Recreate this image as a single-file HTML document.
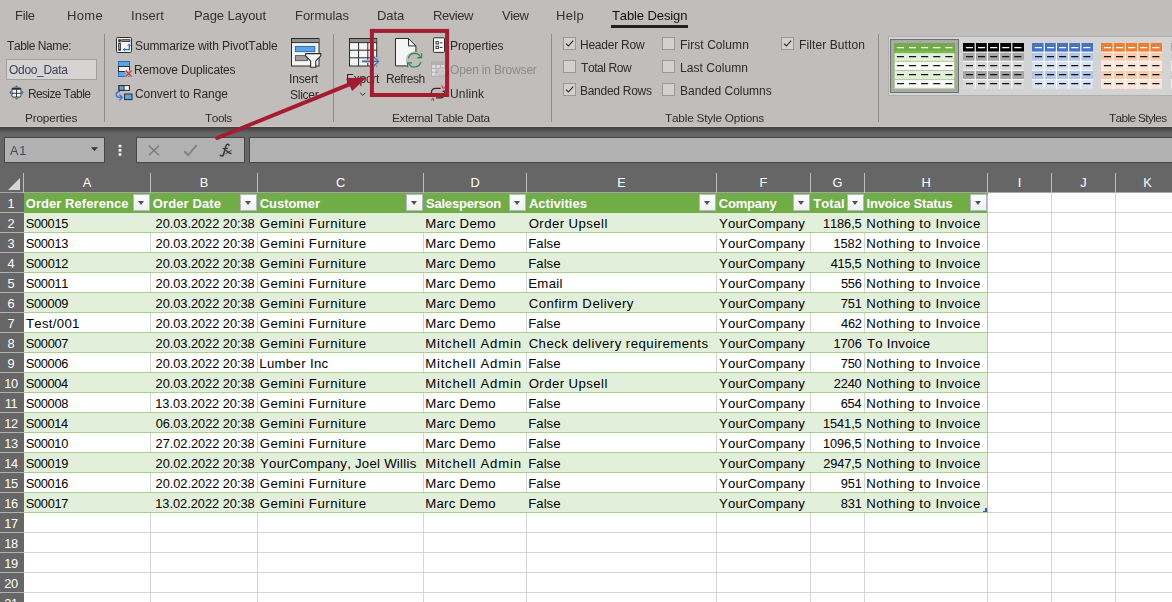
<!DOCTYPE html>
<html><head><meta charset="utf-8"><title>Excel</title>
<style>
html,body{margin:0;padding:0;}
body{width:1172px;height:602px;overflow:hidden;position:relative;background:#fff;font-family:"Liberation Sans",sans-serif;}
.abs{position:absolute;}
#ribbon{position:absolute;left:0;top:0;width:1172px;height:127px;background:#c1bdba;}
.tab{position:absolute;top:7px;font-size:13.4px;color:#262626;white-space:nowrap;line-height:16px;}
.rt{position:absolute;will-change:transform;font-size:12px;color:#262626;white-space:nowrap;line-height:16px;font-kerning:none;}
.gl{position:absolute;font-size:11.6px;color:#333;white-space:nowrap;line-height:14px;top:110px;transform:translateX(-50%);}
.sep{position:absolute;top:34px;width:1px;height:88px;background:#8f8d8b;}
.cb{position:absolute;width:13px;height:13px;box-sizing:border-box;border:1px solid #9a9896;background:#d3d1cf;}
#fbar{position:absolute;left:0;top:127px;width:1172px;height:46px;background:#666666;}
.fbox{position:absolute;top:10.3px;height:25.4px;box-sizing:border-box;background:#b1b1b1;border:1px solid #474747;}
#grid{position:absolute;left:0;top:173px;width:1172px;height:429px;background:#fff;}
.ch{position:absolute;top:0;height:19px;color:#fff;font-size:12.8px;line-height:20px;text-align:center;}
.rh{position:absolute;left:0;width:22px;background:#666666;color:#fff;font-size:12.8px;line-height:21px;text-align:center;height:19px;letter-spacing:-0.35px;}
.c{position:absolute;font-size:13.2px;font-kerning:none;line-height:21px;height:20px;white-space:nowrap;color:#000;overflow:visible;}
.h{font-weight:bold;color:#fff;}
.fb{position:absolute;width:16.8px;height:16.5px;background:linear-gradient(#ffffff,#eef0f4);border:1px solid #b6b4c6;box-sizing:border-box;}
.fb:after{content:"";position:absolute;left:3.8px;top:5.7px;border-left:3.6px solid transparent;border-right:3.6px solid transparent;border-top:4.1px solid #505050;}
</style></head><body>

<div id="ribbon">
<div class="rt" style="left:14.63px;top:8.10px;font-size:13.0px;letter-spacing:-0.301px;color:#333130;">File</div>
<div class="rt" style="left:66.93px;top:8.10px;font-size:13.0px;letter-spacing:0.356px;color:#333130;">Home</div>
<div class="rt" style="left:130.70px;top:8.10px;font-size:13.0px;letter-spacing:0.056px;color:#333130;">Insert</div>
<div class="rt" style="left:193.73px;top:8.10px;font-size:13.0px;letter-spacing:-0.094px;color:#333130;">Page Layout</div>
<div class="rt" style="left:294.53px;top:8.10px;font-size:13.0px;letter-spacing:-0.034px;color:#333130;">Formulas</div>
<div class="rt" style="left:377.03px;top:8.10px;font-size:13.0px;letter-spacing:-0.065px;color:#333130;">Data</div>
<div class="rt" style="left:432.93px;top:8.10px;font-size:13.0px;letter-spacing:-0.438px;color:#333130;">Review</div>
<div class="rt" style="left:501.64px;top:8.10px;font-size:13.0px;letter-spacing:-0.417px;color:#333130;">View</div>
<div class="rt" style="left:555.83px;top:8.10px;font-size:13.0px;letter-spacing:0.359px;color:#333130;">Help</div>
<div class="rt" style="left:611.71px;top:8.10px;font-size:13.0px;letter-spacing:-0.106px;color:#111;">Table Design</div>
<div class="abs" style="left:611px;top:25px;width:77px;height:3px;background:#1f1f1f"></div>
<div class="abs" style="left:0;top:126px;width:1172px;height:1px;background:#cbc7c4"></div>
<div class="sep" style="left:104px"></div>
<div class="sep" style="left:333px"></div>
<div class="sep" style="left:551px"></div>
<div class="sep" style="left:878px"></div>
<div class="rt" style="left:6.83px;top:37.94px;font-size:12.0px;letter-spacing:-0.423px;color:#2b2b2b;">Table Name:</div>
<div class="abs" style="left:6px;top:59px;width:91px;height:21px;box-sizing:border-box;background:#d6d4d2;border:1px solid #a3a1a0"></div>
<div class="rt" style="left:8.73px;top:61.64px;font-size:12.0px;letter-spacing:-0.314px;color:#3b3f55;">Odoo_Data</div>
<div class="rt" style="left:27.52px;top:86.04px;font-size:12.0px;letter-spacing:-0.656px;color:#2b2b2b;">Resize Table</div>
<div class="rt" style="left:24.53px;top:109.61px;font-size:11.8px;letter-spacing:-0.165px;color:#2d2d2d;">Properties</div>
<div class="rt" style="left:134.76px;top:37.94px;font-size:12.0px;letter-spacing:-0.109px;color:#2b2b2b;">Summarize with PivotTable</div>
<div class="rt" style="left:134.32px;top:61.64px;font-size:12.0px;letter-spacing:-0.152px;color:#2b2b2b;">Remove Duplicates</div>
<div class="rt" style="left:134.69px;top:86.04px;font-size:12.0px;letter-spacing:-0.074px;color:#2b2b2b;">Convert to Range</div>
<div class="rt" style="left:289.49px;top:71.04px;font-size:12.0px;letter-spacing:-0.163px;color:#2b2b2b;">Insert</div>
<div class="rt" style="left:290.46px;top:86.74px;font-size:12.0px;letter-spacing:-0.252px;color:#2b2b2b;">Slicer</div>
<div class="rt" style="left:204.73px;top:109.51px;font-size:11.8px;letter-spacing:-0.441px;color:#2d2d2d;">Tools</div>
<div class="rt" style="left:345.72px;top:71.04px;font-size:12.0px;letter-spacing:-0.262px;color:#2b2b2b;">Export</div>
<div class="rt" style="left:385.92px;top:71.04px;font-size:12.0px;letter-spacing:-0.492px;color:#2b2b2b;">Refresh</div>
<div class="rt" style="left:449.52px;top:37.74px;font-size:12.0px;letter-spacing:-0.119px;color:#2b2b2b;">Properties</div>
<div class="rt" style="left:449.93px;top:61.84px;font-size:12.0px;letter-spacing:-0.179px;color:#8d8b89;">Open in Browser</div>
<div class="rt" style="left:449.57px;top:86.04px;font-size:12.0px;letter-spacing:0.152px;color:#2b2b2b;">Unlink</div>
<div class="rt" style="left:392.43px;top:109.61px;font-size:11.8px;letter-spacing:-0.346px;color:#2d2d2d;">External Table Data</div>
<div class="cb" style="left:563px;top:37px"></div>
<svg class="abs" style="left:563px;top:37px" width="13" height="13"><path d="M3 6.6 L5.4 9 L10.2 3.6" fill="none" stroke="#262626" stroke-width="1.1"/></svg>
<div class="cb" style="left:563px;top:60px"></div>
<div class="cb" style="left:563px;top:83px"></div>
<svg class="abs" style="left:563px;top:83px" width="13" height="13"><path d="M3 6.6 L5.4 9 L10.2 3.6" fill="none" stroke="#262626" stroke-width="1.1"/></svg>
<div class="cb" style="left:662px;top:37px"></div>
<div class="cb" style="left:662px;top:60px"></div>
<div class="cb" style="left:662px;top:83px"></div>
<div class="cb" style="left:781px;top:37px"></div>
<svg class="abs" style="left:781px;top:37px" width="13" height="13"><path d="M3 6.6 L5.4 9 L10.2 3.6" fill="none" stroke="#262626" stroke-width="1.1"/></svg>
<div class="rt" style="left:580.32px;top:36.64px;font-size:12.0px;letter-spacing:-0.238px;color:#2b2b2b;">Header Row</div>
<div class="rt" style="left:581.03px;top:59.84px;font-size:12.0px;letter-spacing:-0.410px;color:#2b2b2b;">Total Row</div>
<div class="rt" style="left:580.32px;top:82.74px;font-size:12.0px;letter-spacing:-0.279px;color:#2b2b2b;">Banded Rows</div>
<div class="rt" style="left:679.52px;top:36.64px;font-size:12.0px;letter-spacing:0.078px;color:#2b2b2b;">First Column</div>
<div class="rt" style="left:679.52px;top:59.84px;font-size:12.0px;letter-spacing:0.060px;color:#2b2b2b;">Last Column</div>
<div class="rt" style="left:679.52px;top:82.74px;font-size:12.0px;letter-spacing:-0.026px;color:#2b2b2b;">Banded Columns</div>
<div class="rt" style="left:798.52px;top:36.64px;font-size:12.0px;letter-spacing:0.098px;color:#2b2b2b;">Filter Button</div>
<div class="rt" style="left:664.93px;top:109.51px;font-size:11.8px;letter-spacing:-0.205px;color:#2d2d2d;">Table Style Options</div>
<div class="rt" style="left:1109.23px;top:109.51px;font-size:11.8px;letter-spacing:-0.612px;color:#2d2d2d;">Table Styles</div>
<div class="abs" style="left:888px;top:36px;width:300px;height:60px;box-sizing:border-box;background:#d3d3d3;border:1px solid #b1afad"></div>
<div class="abs" style="left:890px;top:39px;width:69px;height:54px;box-sizing:border-box;background:#a9a9a9;border:1px solid #6e6e6e"></div>
<svg class="abs" style="left:894px;top:43.0px" width="61.0" height="45.8" viewBox="0 0 61.0 45.8"><rect x="0" y="0.00" width="61.0" height="9.16" fill="#70ad47"/><rect x="0" y="9.16" width="61.0" height="9.16" fill="#e2efda"/><rect x="0" y="18.32" width="61.0" height="9.16" fill="#ffffff"/><rect x="0" y="27.48" width="61.0" height="9.16" fill="#e2efda"/><rect x="0" y="36.64" width="61.0" height="9.16" fill="#ffffff"/><rect x="0" y="8.66" width="61.0" height="1" fill="#a9d08e"/><rect x="0" y="17.82" width="61.0" height="1" fill="#a9d08e"/><rect x="0" y="26.98" width="61.0" height="1" fill="#a9d08e"/><rect x="0" y="36.14" width="61.0" height="1" fill="#a9d08e"/><rect x="0.5" y="0.5" width="60.0" height="44.8" fill="none" stroke="#a9d08e" stroke-width="1"/><rect x="0.5" y="0.5" width="60.0" height="9.16" fill="none" stroke="#70ad47" stroke-width="1"/><rect x="2.90" y="4" width="7.1" height="1.25" fill="#ffffff"/><rect x="15.00" y="4" width="7.1" height="1.25" fill="#ffffff"/><rect x="27.10" y="4" width="7.1" height="1.25" fill="#ffffff"/><rect x="39.20" y="4" width="7.1" height="1.25" fill="#ffffff"/><rect x="51.30" y="4" width="7.1" height="1.25" fill="#ffffff"/><rect x="2.90" y="13" width="7.1" height="1.25" fill="#111111"/><rect x="15.00" y="13" width="7.1" height="1.25" fill="#111111"/><rect x="27.10" y="13" width="7.1" height="1.25" fill="#111111"/><rect x="39.20" y="13" width="7.1" height="1.25" fill="#111111"/><rect x="51.30" y="13" width="7.1" height="1.25" fill="#111111"/><rect x="2.90" y="22" width="7.1" height="1.25" fill="#111111"/><rect x="15.00" y="22" width="7.1" height="1.25" fill="#111111"/><rect x="27.10" y="22" width="7.1" height="1.25" fill="#111111"/><rect x="39.20" y="22" width="7.1" height="1.25" fill="#111111"/><rect x="51.30" y="22" width="7.1" height="1.25" fill="#111111"/><rect x="2.90" y="31" width="7.1" height="1.25" fill="#111111"/><rect x="15.00" y="31" width="7.1" height="1.25" fill="#111111"/><rect x="27.10" y="31" width="7.1" height="1.25" fill="#111111"/><rect x="39.20" y="31" width="7.1" height="1.25" fill="#111111"/><rect x="51.30" y="31" width="7.1" height="1.25" fill="#111111"/><rect x="2.90" y="40" width="7.1" height="1.25" fill="#111111"/><rect x="15.00" y="40" width="7.1" height="1.25" fill="#111111"/><rect x="27.10" y="40" width="7.1" height="1.25" fill="#111111"/><rect x="39.20" y="40" width="7.1" height="1.25" fill="#111111"/><rect x="51.30" y="40" width="7.1" height="1.25" fill="#111111"/></svg>
<svg class="abs" style="left:963px;top:43.0px" width="61.0" height="45.8" viewBox="0 0 61.0 45.8"><rect x="0" y="0.00" width="61.0" height="9.16" fill="#000000"/><rect x="0" y="9.16" width="61.0" height="9.16" fill="#a6a6a6"/><rect x="0" y="18.32" width="61.0" height="9.16" fill="#d9d9d9"/><rect x="0" y="27.48" width="61.0" height="9.16" fill="#a6a6a6"/><rect x="0" y="36.64" width="61.0" height="9.16" fill="#d9d9d9"/><rect x="0" y="8.56" width="61.0" height="1.1" fill="#fafafa"/><rect x="0" y="17.72" width="61.0" height="1.1" fill="#fafafa"/><rect x="0" y="26.88" width="61.0" height="1.1" fill="#fafafa"/><rect x="0" y="36.04" width="61.0" height="1.1" fill="#fafafa"/><rect x="11.60" y="0" width="1.2" height="45.8" fill="#fafafa"/><rect x="23.80" y="0" width="1.2" height="45.8" fill="#fafafa"/><rect x="36.00" y="0" width="1.2" height="45.8" fill="#fafafa"/><rect x="48.20" y="0" width="1.2" height="45.8" fill="#fafafa"/><rect x="2.90" y="4" width="7.1" height="1.25" fill="#ffffff"/><rect x="15.00" y="4" width="7.1" height="1.25" fill="#ffffff"/><rect x="27.10" y="4" width="7.1" height="1.25" fill="#ffffff"/><rect x="39.20" y="4" width="7.1" height="1.25" fill="#ffffff"/><rect x="51.30" y="4" width="7.1" height="1.25" fill="#ffffff"/><rect x="2.90" y="13" width="7.1" height="1.25" fill="#111111"/><rect x="15.00" y="13" width="7.1" height="1.25" fill="#111111"/><rect x="27.10" y="13" width="7.1" height="1.25" fill="#111111"/><rect x="39.20" y="13" width="7.1" height="1.25" fill="#111111"/><rect x="51.30" y="13" width="7.1" height="1.25" fill="#111111"/><rect x="2.90" y="22" width="7.1" height="1.25" fill="#111111"/><rect x="15.00" y="22" width="7.1" height="1.25" fill="#111111"/><rect x="27.10" y="22" width="7.1" height="1.25" fill="#111111"/><rect x="39.20" y="22" width="7.1" height="1.25" fill="#111111"/><rect x="51.30" y="22" width="7.1" height="1.25" fill="#111111"/><rect x="2.90" y="31" width="7.1" height="1.25" fill="#111111"/><rect x="15.00" y="31" width="7.1" height="1.25" fill="#111111"/><rect x="27.10" y="31" width="7.1" height="1.25" fill="#111111"/><rect x="39.20" y="31" width="7.1" height="1.25" fill="#111111"/><rect x="51.30" y="31" width="7.1" height="1.25" fill="#111111"/><rect x="2.90" y="40" width="7.1" height="1.25" fill="#111111"/><rect x="15.00" y="40" width="7.1" height="1.25" fill="#111111"/><rect x="27.10" y="40" width="7.1" height="1.25" fill="#111111"/><rect x="39.20" y="40" width="7.1" height="1.25" fill="#111111"/><rect x="51.30" y="40" width="7.1" height="1.25" fill="#111111"/></svg>
<svg class="abs" style="left:1032.3px;top:43.0px" width="61.0" height="45.8" viewBox="0 0 61.0 45.8"><rect x="0" y="0.00" width="61.0" height="9.16" fill="#4472c4"/><rect x="0" y="9.16" width="61.0" height="9.16" fill="#b4c6e7"/><rect x="0" y="18.32" width="61.0" height="9.16" fill="#d9e2f3"/><rect x="0" y="27.48" width="61.0" height="9.16" fill="#b4c6e7"/><rect x="0" y="36.64" width="61.0" height="9.16" fill="#d9e2f3"/><rect x="0" y="8.56" width="61.0" height="1.1" fill="#fafafa"/><rect x="0" y="17.72" width="61.0" height="1.1" fill="#fafafa"/><rect x="0" y="26.88" width="61.0" height="1.1" fill="#fafafa"/><rect x="0" y="36.04" width="61.0" height="1.1" fill="#fafafa"/><rect x="11.60" y="0" width="1.2" height="45.8" fill="#fafafa"/><rect x="23.80" y="0" width="1.2" height="45.8" fill="#fafafa"/><rect x="36.00" y="0" width="1.2" height="45.8" fill="#fafafa"/><rect x="48.20" y="0" width="1.2" height="45.8" fill="#fafafa"/><rect x="2.90" y="4" width="7.1" height="1.25" fill="#ffffff"/><rect x="15.00" y="4" width="7.1" height="1.25" fill="#ffffff"/><rect x="27.10" y="4" width="7.1" height="1.25" fill="#ffffff"/><rect x="39.20" y="4" width="7.1" height="1.25" fill="#ffffff"/><rect x="51.30" y="4" width="7.1" height="1.25" fill="#ffffff"/><rect x="2.90" y="13" width="7.1" height="1.25" fill="#111111"/><rect x="15.00" y="13" width="7.1" height="1.25" fill="#111111"/><rect x="27.10" y="13" width="7.1" height="1.25" fill="#111111"/><rect x="39.20" y="13" width="7.1" height="1.25" fill="#111111"/><rect x="51.30" y="13" width="7.1" height="1.25" fill="#111111"/><rect x="2.90" y="22" width="7.1" height="1.25" fill="#111111"/><rect x="15.00" y="22" width="7.1" height="1.25" fill="#111111"/><rect x="27.10" y="22" width="7.1" height="1.25" fill="#111111"/><rect x="39.20" y="22" width="7.1" height="1.25" fill="#111111"/><rect x="51.30" y="22" width="7.1" height="1.25" fill="#111111"/><rect x="2.90" y="31" width="7.1" height="1.25" fill="#111111"/><rect x="15.00" y="31" width="7.1" height="1.25" fill="#111111"/><rect x="27.10" y="31" width="7.1" height="1.25" fill="#111111"/><rect x="39.20" y="31" width="7.1" height="1.25" fill="#111111"/><rect x="51.30" y="31" width="7.1" height="1.25" fill="#111111"/><rect x="2.90" y="40" width="7.1" height="1.25" fill="#111111"/><rect x="15.00" y="40" width="7.1" height="1.25" fill="#111111"/><rect x="27.10" y="40" width="7.1" height="1.25" fill="#111111"/><rect x="39.20" y="40" width="7.1" height="1.25" fill="#111111"/><rect x="51.30" y="40" width="7.1" height="1.25" fill="#111111"/></svg>
<svg class="abs" style="left:1101.3px;top:43.0px" width="61.0" height="45.8" viewBox="0 0 61.0 45.8"><rect x="0" y="0.00" width="61.0" height="9.16" fill="#ed7d31"/><rect x="0" y="9.16" width="61.0" height="9.16" fill="#f8cbad"/><rect x="0" y="18.32" width="61.0" height="9.16" fill="#fce4d6"/><rect x="0" y="27.48" width="61.0" height="9.16" fill="#f8cbad"/><rect x="0" y="36.64" width="61.0" height="9.16" fill="#fce4d6"/><rect x="0" y="8.56" width="61.0" height="1.1" fill="#fafafa"/><rect x="0" y="17.72" width="61.0" height="1.1" fill="#fafafa"/><rect x="0" y="26.88" width="61.0" height="1.1" fill="#fafafa"/><rect x="0" y="36.04" width="61.0" height="1.1" fill="#fafafa"/><rect x="11.60" y="0" width="1.2" height="45.8" fill="#fafafa"/><rect x="23.80" y="0" width="1.2" height="45.8" fill="#fafafa"/><rect x="36.00" y="0" width="1.2" height="45.8" fill="#fafafa"/><rect x="48.20" y="0" width="1.2" height="45.8" fill="#fafafa"/><rect x="2.90" y="4" width="7.1" height="1.25" fill="#ffffff"/><rect x="15.00" y="4" width="7.1" height="1.25" fill="#ffffff"/><rect x="27.10" y="4" width="7.1" height="1.25" fill="#ffffff"/><rect x="39.20" y="4" width="7.1" height="1.25" fill="#ffffff"/><rect x="51.30" y="4" width="7.1" height="1.25" fill="#ffffff"/><rect x="2.90" y="13" width="7.1" height="1.25" fill="#111111"/><rect x="15.00" y="13" width="7.1" height="1.25" fill="#111111"/><rect x="27.10" y="13" width="7.1" height="1.25" fill="#111111"/><rect x="39.20" y="13" width="7.1" height="1.25" fill="#111111"/><rect x="51.30" y="13" width="7.1" height="1.25" fill="#111111"/><rect x="2.90" y="22" width="7.1" height="1.25" fill="#111111"/><rect x="15.00" y="22" width="7.1" height="1.25" fill="#111111"/><rect x="27.10" y="22" width="7.1" height="1.25" fill="#111111"/><rect x="39.20" y="22" width="7.1" height="1.25" fill="#111111"/><rect x="51.30" y="22" width="7.1" height="1.25" fill="#111111"/><rect x="2.90" y="31" width="7.1" height="1.25" fill="#111111"/><rect x="15.00" y="31" width="7.1" height="1.25" fill="#111111"/><rect x="27.10" y="31" width="7.1" height="1.25" fill="#111111"/><rect x="39.20" y="31" width="7.1" height="1.25" fill="#111111"/><rect x="51.30" y="31" width="7.1" height="1.25" fill="#111111"/><rect x="2.90" y="40" width="7.1" height="1.25" fill="#111111"/><rect x="15.00" y="40" width="7.1" height="1.25" fill="#111111"/><rect x="27.10" y="40" width="7.1" height="1.25" fill="#111111"/><rect x="39.20" y="40" width="7.1" height="1.25" fill="#111111"/><rect x="51.30" y="40" width="7.1" height="1.25" fill="#111111"/></svg>
<svg class="abs" style="left:1170.6px;top:43.0px" width="61.0" height="45.8" viewBox="0 0 61.0 45.8"><rect x="0" y="0.00" width="61.0" height="9.16" fill="#a5a5a5"/><rect x="0" y="9.16" width="61.0" height="9.16" fill="#c9c9c9"/><rect x="0" y="18.32" width="61.0" height="9.16" fill="#ededed"/><rect x="0" y="27.48" width="61.0" height="9.16" fill="#c9c9c9"/><rect x="0" y="36.64" width="61.0" height="9.16" fill="#ededed"/><rect x="0" y="8.56" width="61.0" height="1.1" fill="#fafafa"/><rect x="0" y="17.72" width="61.0" height="1.1" fill="#fafafa"/><rect x="0" y="26.88" width="61.0" height="1.1" fill="#fafafa"/><rect x="0" y="36.04" width="61.0" height="1.1" fill="#fafafa"/><rect x="11.60" y="0" width="1.2" height="45.8" fill="#fafafa"/><rect x="23.80" y="0" width="1.2" height="45.8" fill="#fafafa"/><rect x="36.00" y="0" width="1.2" height="45.8" fill="#fafafa"/><rect x="48.20" y="0" width="1.2" height="45.8" fill="#fafafa"/><rect x="2.90" y="4" width="7.1" height="1.25" fill="#ffffff"/><rect x="15.00" y="4" width="7.1" height="1.25" fill="#ffffff"/><rect x="27.10" y="4" width="7.1" height="1.25" fill="#ffffff"/><rect x="39.20" y="4" width="7.1" height="1.25" fill="#ffffff"/><rect x="51.30" y="4" width="7.1" height="1.25" fill="#ffffff"/><rect x="2.90" y="13" width="7.1" height="1.25" fill="#111111"/><rect x="15.00" y="13" width="7.1" height="1.25" fill="#111111"/><rect x="27.10" y="13" width="7.1" height="1.25" fill="#111111"/><rect x="39.20" y="13" width="7.1" height="1.25" fill="#111111"/><rect x="51.30" y="13" width="7.1" height="1.25" fill="#111111"/><rect x="2.90" y="22" width="7.1" height="1.25" fill="#111111"/><rect x="15.00" y="22" width="7.1" height="1.25" fill="#111111"/><rect x="27.10" y="22" width="7.1" height="1.25" fill="#111111"/><rect x="39.20" y="22" width="7.1" height="1.25" fill="#111111"/><rect x="51.30" y="22" width="7.1" height="1.25" fill="#111111"/><rect x="2.90" y="31" width="7.1" height="1.25" fill="#111111"/><rect x="15.00" y="31" width="7.1" height="1.25" fill="#111111"/><rect x="27.10" y="31" width="7.1" height="1.25" fill="#111111"/><rect x="39.20" y="31" width="7.1" height="1.25" fill="#111111"/><rect x="51.30" y="31" width="7.1" height="1.25" fill="#111111"/><rect x="2.90" y="40" width="7.1" height="1.25" fill="#111111"/><rect x="15.00" y="40" width="7.1" height="1.25" fill="#111111"/><rect x="27.10" y="40" width="7.1" height="1.25" fill="#111111"/><rect x="39.20" y="40" width="7.1" height="1.25" fill="#111111"/><rect x="51.30" y="40" width="7.1" height="1.25" fill="#111111"/></svg>
<svg class="abs" style="left:8px;top:84px;overflow:visible" width="17" height="17" viewBox="0 0 17 17"><rect x="4" y="4" width="9" height="9" rx="1.2" fill="#f4f6f5" stroke="#2b2b2b" stroke-width="0.9"/><rect x="4" y="4" width="9" height="1.7" rx="0.6" fill="#2b2b2b"/><path d="M8.5 5.6v7.4M4 9.3h9" stroke="#2b2b2b" stroke-width="0.9" fill="none"/><path d="M8.5 1.2l1.7 1.8h-3.4zM8.5 15.8l1.7-1.8h-3.4zM1.2 8.5l1.8-1.7v3.4zM15.8 8.5l-1.8-1.7v3.4z" fill="#2a72cf"/></svg>
<svg class="abs" style="left:116px;top:37px;overflow:visible" width="16" height="16" viewBox="0 0 16 16"><rect x="0.5" y="0.5" width="15" height="15" rx="1.2" fill="#f4f6f5" stroke="#2b2b2b"/><rect x="5.9" y="2.7" width="7.9" height="1.8" fill="#a6a4a2" stroke="#2b2b2b" stroke-width="0.85"/><rect x="2.7" y="2.7" width="1.7" height="1.8" fill="#a6a4a2" stroke="#2b2b2b" stroke-width="0.85"/><rect x="2.7" y="6" width="1.7" height="7.4" fill="#a6a4a2" stroke="#2b2b2b" stroke-width="0.85"/><path d="M7.6 12.6h5.7v-5.4" fill="none" stroke="#2a72cf" stroke-width="1.3"/><path d="M9.2 11L7.4 12.6l1.8 1.6M11.7 8.8l1.6-1.8 1.6 1.8" fill="none" stroke="#2a72cf" stroke-width="1"/></svg>
<svg class="abs" style="left:117px;top:61px;overflow:visible" width="16" height="16" viewBox="0 0 16 16"><rect x="1.5" y="0.5" width="11" height="5" fill="#58a6e6" stroke="#2a6cc4"/><rect x="1.5" y="10.5" width="11" height="5" fill="#58a6e6" stroke="#2a6cc4"/><rect x="1.5" y="5.5" width="11" height="5" fill="#f4f6f5" stroke="#2b2b2b"/><path d="M8.6 9.6l6 6M14.6 9.6l-6 6" stroke="#c1bdba" stroke-width="3.2"/><path d="M8.6 9.6l6 6M14.6 9.6l-6 6" stroke="#e0242c" stroke-width="1.3"/></svg>
<svg class="abs" style="left:115px;top:85px;overflow:visible" width="18" height="16" viewBox="0 0 18 16"><rect x="4" y="0.6" width="10.4" height="4.8" fill="#f4f6f5" stroke="#2b2b2b"/><rect x="4" y="0.6" width="5" height="4.8" fill="#58a6e6" stroke="#2b2b2b"/><rect x="9.6" y="9" width="7.4" height="5.6" fill="#58a6e6" stroke="#2b2b2b"/><path d="M5 6.3C-0.4 7.2 -0.4 12.8 6.6 12.6" fill="none" stroke="#2a72cf" stroke-width="1.3"/><path d="M4.4 9.8l2.9 2.8-2.9 2.8" fill="none" stroke="#2a72cf" stroke-width="1.3"/></svg>
<svg class="abs" style="left:290px;top:37px;overflow:visible" width="32" height="32" viewBox="0 0 32 32"><rect x="1.5" y="1.5" width="27.5" height="27.5" fill="#f4f6f5" stroke="#2b2b2b"/><rect x="2" y="2" width="26.5" height="3.4" fill="#8f8d8b"/><path d="M1.5 5.6h27.5" stroke="#2b2b2b"/><rect x="5.4" y="9.4" width="19.4" height="5.2" fill="#58a6e6" stroke="#2a6cc4"/><rect x="5.4" y="18.6" width="12" height="5" fill="#a19f9d" stroke="#5f5d5b"/><path d="M15.6 16.6h15.2v2.2l-5 5v6.4h-5.2v-6.4l-5-5z" fill="#f4f6f5" stroke="#2b2b2b" stroke-width="1.1" stroke-linejoin="round"/></svg>
<svg class="abs" style="left:348px;top:37px;overflow:visible" width="32" height="32" viewBox="0 0 32 32"><rect x="1.5" y="1.5" width="27.2" height="27.5" fill="#f4f6f5" stroke="#2b2b2b"/><rect x="2" y="2" width="26.2" height="3.4" fill="#8f8d8b"/><path d="M1.5 5.6h27.2M1.5 13.2h27.2M1.5 20.8h27.2M10.6 5.6v23.4M19.8 5.6v23.4" stroke="#2b2b2b" stroke-width="1" fill="none"/><path d="M14 24.4h17M25.4 19.4l5.4 5-5.4 5" stroke="#c1bdba" stroke-width="3.4" fill="none"/><path d="M14.4 24.4h16M25.4 19.6l5.2 4.8-5.2 4.8" stroke="#2a72cf" stroke-width="1.2" fill="none"/></svg>
<svg class="abs" style="left:359px;top:91px;overflow:visible" width="8" height="6" viewBox="0 0 8 6"><path d="M1.2 1.8L3.8 4.4L6.4 1.8" fill="none" stroke="#2b2b2b" stroke-width="1"/></svg>
<svg class="abs" style="left:393px;top:37px;overflow:visible" width="32" height="32" viewBox="0 0 32 32"><path d="M2.5 1.5h13l7.4 7.4v20h-20.4z" fill="#f4f6f5" stroke="#2b2b2b" stroke-linejoin="miter"/><path d="M15.5 1.5v7.4h7.4" fill="none" stroke="#2b2b2b"/><circle cx="21.6" cy="23.2" r="8.8" fill="#c1bdba"/><path d="M15.4 21.4A6.4 6.4 0 0 1 27.4 20" fill="none" stroke="#1d8b4c" stroke-width="1.15"/><path d="M28.6 16.2v4.4h-4.4" fill="none" stroke="#1d8b4c" stroke-width="1.15"/><path d="M27.8 25A6.4 6.4 0 0 1 15.8 26.4" fill="none" stroke="#1d8b4c" stroke-width="1.15"/><path d="M14.6 30.2v-4.4h4.4" fill="none" stroke="#1d8b4c" stroke-width="1.15"/></svg>
<svg class="abs" style="left:432px;top:37px;overflow:visible" width="14" height="16" viewBox="0 0 14 16"><rect x="1.5" y="0.8" width="11" height="14.6" rx="0.8" fill="#f4f6f5" stroke="#2b2b2b"/><rect x="4" y="4.6" width="2.4" height="2.4" fill="none" stroke="#2b2b2b" stroke-width="0.9"/><rect x="4" y="9.2" width="2.4" height="2.4" fill="none" stroke="#2b2b2b" stroke-width="0.9"/><path d="M7.8 5.8h2.6M7.8 10.4h2.6" stroke="#2b2b2b" stroke-width="1"/></svg>
<svg class="abs" style="left:431px;top:61px;overflow:visible" width="16" height="16" viewBox="0 0 16 16"><rect x="0.5" y="0.8" width="13.4" height="14.4" fill="#e0dedc" stroke="#aeacaa"/><path d="M0.5 3.6h13.4M0.5 7.4h13.4M0.5 11.2h13.4M5 3.6v11.6M9.4 3.6v11.6" stroke="#aeacaa" fill="none"/><rect x="0.5" y="0.8" width="13.4" height="2.6" fill="#b3b1af"/><circle cx="10.8" cy="10.8" r="4.4" fill="#d4d2d0" stroke="#b3b1af"/><path d="M6.4 10.8h8.8M10.8 6.4v8.8" stroke="#bebcba" stroke-width="0.8"/><ellipse cx="10.8" cy="10.8" rx="2" ry="4.4" fill="none" stroke="#bebcba" stroke-width="0.7"/></svg>
<svg class="abs" style="left:430px;top:85px;overflow:visible" width="16" height="16" viewBox="0 0 16 16"><rect x="1.4" y="3.3" width="13.2" height="9.6" rx="4.2" fill="none" stroke="#2b2b2b" stroke-width="1.3"/><path d="M10.6 0.6h5.4v5h-5.4zM0 10.8h6v5h-6z" fill="#c1bdba"/><rect x="12.6" y="5.8" width="2.6" height="1.3" fill="#2b2b2b"/><path d="M11.9 0.3l0.9 3.1M14.6 1.6l-0.8 2.6M3.6 15.9l-0.5-2.8M1.4 15.4l1.4-2.6" stroke="#e0242c" stroke-width="1"/></svg>
</div>
<div id="fbar">
<div class="abs" style="left:0;top:0;width:1172px;height:6px;background:linear-gradient(#3c3c3c,#666666)"></div>
<div class="fbox" style="left:3.5px;width:101px"></div>
<div class="fbox" style="left:135.5px;width:109px"></div>
<div class="fbox" style="left:248.5px;width:930px"></div>
<div class="rt" style="left:10.38px;top:15.53px;font-size:12.6px;letter-spacing:0.728px;color:#444a5a">A1</div>
<svg class="abs" style="left:90px;top:19px" width="9" height="6"><polygon points="1,1.2 8,1.2 4.5,5" fill="#333"/></svg>
<svg class="abs" style="left:118px;top:17px" width="4" height="13"><rect x="0.6" y="0.8" width="2.8" height="2.6" fill="#f2f2f2"/><rect x="0.6" y="5" width="2.8" height="2.6" fill="#f2f2f2"/><rect x="0.6" y="9.2" width="2.8" height="2.6" fill="#f2f2f2"/></svg>
<svg class="abs" style="left:147px;top:17px" width="14" height="13"><path d="M1.8 1.6L12 11.2M12 1.6L1.8 11.2" stroke="#7d7d7d" stroke-width="1.5" fill="none"/></svg>
<svg class="abs" style="left:183px;top:17px" width="15" height="13"><path d="M1.2 7.2L5.2 11L13.6 1.2" stroke="#828282" stroke-width="1.9" fill="none"/></svg>
<svg class="abs" style="left:218px;top:15px" width="16" height="16" viewBox="0 0 16 16"><path d="M11.1 3.4C10.8 1.7 8.5 1.6 7.9 4L5.7 12C5.1 14.3 3.2 14.6 2.3 13.3" fill="none" stroke="#333" stroke-width="1.45" stroke-linecap="round"/><path d="M4.6 6.5H10" stroke="#333" stroke-width="1.2"/><path d="M7.6 8.4C9.6 8 9.8 11.8 13.4 11.6" fill="none" stroke="#333" stroke-width="1.5"/><path d="M13.6 8.2L7.4 11.9" stroke="#333" stroke-width="0.9"/></svg>
</div>
<div id="grid">
<div class="abs" style="left:0;top:0;width:1172px;height:19px;background:#666666"></div>
<div class="abs" style="left:0;top:19px;width:1172px;height:1px;background:#a6a6a6"></div>
<svg class="abs" style="left:8px;top:4.5px" width="12" height="12"><polygon points="12,0 12,12 0,12" fill="#d6d6d6"/></svg>
<div class="abs" style="left:23px;top:0px;width:1px;height:20px;background:#bdbdbd"></div>
<div class="ch" style="left:24px;width:126px">A</div>
<div class="abs" style="left:150px;top:0px;width:1px;height:20px;background:#bdbdbd"></div>
<div class="ch" style="left:151px;width:106px">B</div>
<div class="abs" style="left:257px;top:0px;width:1px;height:20px;background:#bdbdbd"></div>
<div class="ch" style="left:258px;width:165px">C</div>
<div class="abs" style="left:423px;top:0px;width:1px;height:20px;background:#bdbdbd"></div>
<div class="ch" style="left:424px;width:102px">D</div>
<div class="abs" style="left:526px;top:0px;width:1px;height:20px;background:#bdbdbd"></div>
<div class="ch" style="left:527px;width:189px">E</div>
<div class="abs" style="left:716px;top:0px;width:1px;height:20px;background:#bdbdbd"></div>
<div class="ch" style="left:717px;width:93px">F</div>
<div class="abs" style="left:810px;top:0px;width:1px;height:20px;background:#bdbdbd"></div>
<div class="ch" style="left:811px;width:53px">G</div>
<div class="abs" style="left:864px;top:0px;width:1px;height:20px;background:#bdbdbd"></div>
<div class="ch" style="left:865px;width:122px">H</div>
<div class="abs" style="left:987px;top:0px;width:1px;height:20px;background:#bdbdbd"></div>
<div class="ch" style="left:988px;width:63px">I</div>
<div class="abs" style="left:1051px;top:0px;width:1px;height:20px;background:#bdbdbd"></div>
<div class="ch" style="left:1052px;width:63px">J</div>
<div class="abs" style="left:1115px;top:0px;width:1px;height:20px;background:#bdbdbd"></div>
<div class="ch" style="left:1116px;width:63px">K</div>
<div class="abs" style="left:1179px;top:0px;width:1px;height:20px;background:#bdbdbd"></div>
<div class="rh" style="top:20px">1</div>
<div class="abs" style="left:0;top:39px;width:23.6px;height:1px;background:#b2b2b2;z-index:2"></div>
<div class="rh" style="top:40px">2</div>
<div class="abs" style="left:0;top:59px;width:23.6px;height:1px;background:#b2b2b2;z-index:2"></div>
<div class="rh" style="top:60px">3</div>
<div class="abs" style="left:0;top:79px;width:23.6px;height:1px;background:#b2b2b2;z-index:2"></div>
<div class="rh" style="top:80px">4</div>
<div class="abs" style="left:0;top:99px;width:23.6px;height:1px;background:#b2b2b2;z-index:2"></div>
<div class="rh" style="top:100px">5</div>
<div class="abs" style="left:0;top:119px;width:23.6px;height:1px;background:#b2b2b2;z-index:2"></div>
<div class="rh" style="top:120px">6</div>
<div class="abs" style="left:0;top:139px;width:23.6px;height:1px;background:#b2b2b2;z-index:2"></div>
<div class="rh" style="top:140px">7</div>
<div class="abs" style="left:0;top:159px;width:23.6px;height:1px;background:#b2b2b2;z-index:2"></div>
<div class="rh" style="top:160px">8</div>
<div class="abs" style="left:0;top:179px;width:23.6px;height:1px;background:#b2b2b2;z-index:2"></div>
<div class="rh" style="top:180px">9</div>
<div class="abs" style="left:0;top:199px;width:23.6px;height:1px;background:#b2b2b2;z-index:2"></div>
<div class="rh" style="top:200px">10</div>
<div class="abs" style="left:0;top:219px;width:23.6px;height:1px;background:#b2b2b2;z-index:2"></div>
<div class="rh" style="top:220px">11</div>
<div class="abs" style="left:0;top:239px;width:23.6px;height:1px;background:#b2b2b2;z-index:2"></div>
<div class="rh" style="top:240px">12</div>
<div class="abs" style="left:0;top:259px;width:23.6px;height:1px;background:#b2b2b2;z-index:2"></div>
<div class="rh" style="top:260px">13</div>
<div class="abs" style="left:0;top:279px;width:23.6px;height:1px;background:#b2b2b2;z-index:2"></div>
<div class="rh" style="top:280px">14</div>
<div class="abs" style="left:0;top:299px;width:23.6px;height:1px;background:#b2b2b2;z-index:2"></div>
<div class="rh" style="top:300px">15</div>
<div class="abs" style="left:0;top:319px;width:23.6px;height:1px;background:#b2b2b2;z-index:2"></div>
<div class="rh" style="top:320px">16</div>
<div class="abs" style="left:0;top:339px;width:23.6px;height:1px;background:#b2b2b2;z-index:2"></div>
<div class="rh" style="top:340px">17</div>
<div class="abs" style="left:0;top:359px;width:23.6px;height:1px;background:#b2b2b2;z-index:2"></div>
<div class="rh" style="top:360px">18</div>
<div class="abs" style="left:0;top:379px;width:23.6px;height:1px;background:#b2b2b2;z-index:2"></div>
<div class="rh" style="top:380px">19</div>
<div class="abs" style="left:0;top:399px;width:23.6px;height:1px;background:#b2b2b2;z-index:2"></div>
<div class="rh" style="top:400px">20</div>
<div class="abs" style="left:0;top:419px;width:23.6px;height:1px;background:#b2b2b2;z-index:2"></div>
<div class="rh" style="top:420px">21</div>
<div class="abs" style="left:0;top:439px;width:23.6px;height:1px;background:#b2b2b2;z-index:2"></div>
<div class="abs" style="left:22px;top:20px;width:1.6px;height:410px;background:#666666"></div>
<div class="abs" style="left:150px;top:20px;width:1px;height:410px;background:#d4d4d4"></div>
<div class="abs" style="left:257px;top:20px;width:1px;height:410px;background:#d4d4d4"></div>
<div class="abs" style="left:423px;top:20px;width:1px;height:410px;background:#d4d4d4"></div>
<div class="abs" style="left:526px;top:20px;width:1px;height:410px;background:#d4d4d4"></div>
<div class="abs" style="left:716px;top:20px;width:1px;height:410px;background:#d4d4d4"></div>
<div class="abs" style="left:810px;top:20px;width:1px;height:410px;background:#d4d4d4"></div>
<div class="abs" style="left:864px;top:20px;width:1px;height:410px;background:#d4d4d4"></div>
<div class="abs" style="left:987px;top:20px;width:1px;height:410px;background:#d4d4d4"></div>
<div class="abs" style="left:1051px;top:20px;width:1px;height:410px;background:#d4d4d4"></div>
<div class="abs" style="left:1115px;top:20px;width:1px;height:410px;background:#d4d4d4"></div>
<div class="abs" style="left:1179px;top:20px;width:1px;height:410px;background:#d4d4d4"></div>
<div class="abs" style="left:24px;top:39px;width:1148px;height:1px;background:#d4d4d4"></div>
<div class="abs" style="left:24px;top:59px;width:1148px;height:1px;background:#d4d4d4"></div>
<div class="abs" style="left:24px;top:79px;width:1148px;height:1px;background:#d4d4d4"></div>
<div class="abs" style="left:24px;top:99px;width:1148px;height:1px;background:#d4d4d4"></div>
<div class="abs" style="left:24px;top:119px;width:1148px;height:1px;background:#d4d4d4"></div>
<div class="abs" style="left:24px;top:139px;width:1148px;height:1px;background:#d4d4d4"></div>
<div class="abs" style="left:24px;top:159px;width:1148px;height:1px;background:#d4d4d4"></div>
<div class="abs" style="left:24px;top:179px;width:1148px;height:1px;background:#d4d4d4"></div>
<div class="abs" style="left:24px;top:199px;width:1148px;height:1px;background:#d4d4d4"></div>
<div class="abs" style="left:24px;top:219px;width:1148px;height:1px;background:#d4d4d4"></div>
<div class="abs" style="left:24px;top:239px;width:1148px;height:1px;background:#d4d4d4"></div>
<div class="abs" style="left:24px;top:259px;width:1148px;height:1px;background:#d4d4d4"></div>
<div class="abs" style="left:24px;top:279px;width:1148px;height:1px;background:#d4d4d4"></div>
<div class="abs" style="left:24px;top:299px;width:1148px;height:1px;background:#d4d4d4"></div>
<div class="abs" style="left:24px;top:319px;width:1148px;height:1px;background:#d4d4d4"></div>
<div class="abs" style="left:24px;top:339px;width:1148px;height:1px;background:#d4d4d4"></div>
<div class="abs" style="left:24px;top:359px;width:1148px;height:1px;background:#d4d4d4"></div>
<div class="abs" style="left:24px;top:379px;width:1148px;height:1px;background:#d4d4d4"></div>
<div class="abs" style="left:24px;top:399px;width:1148px;height:1px;background:#d4d4d4"></div>
<div class="abs" style="left:24px;top:419px;width:1148px;height:1px;background:#d4d4d4"></div>
<div class="abs" style="left:24px;top:439px;width:1148px;height:1px;background:#d4d4d4"></div>
<div class="abs" style="left:24px;top:20px;width:964px;height:19.6px;background:#70ad47"></div>
<div class="abs" style="left:987px;top:22px;width:1px;height:18px;background:#a9d08e"></div>
<div class="c h" style="left:25.77px;top:20px;font-size:13.0px;letter-spacing:0.057px">Order Reference</div>
<div class="fb" style="left:133.2px;top:21.3px"></div>
<div class="c h" style="left:152.77px;top:20px;font-size:13.0px;letter-spacing:0.121px">Order Date</div>
<div class="fb" style="left:240.2px;top:21.3px"></div>
<div class="c h" style="left:259.77px;top:20px;font-size:13.0px;letter-spacing:-0.050px">Customer</div>
<div class="fb" style="left:406.2px;top:21.3px"></div>
<div class="c h" style="left:425.93px;top:20px;font-size:13.0px;letter-spacing:-0.193px">Salesperson</div>
<div class="fb" style="left:509.2px;top:21.3px"></div>
<div class="c h" style="left:528.98px;top:20px;font-size:13.0px;letter-spacing:0.017px">Activities</div>
<div class="fb" style="left:699.2px;top:21.3px"></div>
<div class="c h" style="left:718.77px;top:20px;font-size:13.0px;letter-spacing:-0.221px">Company</div>
<div class="fb" style="left:793.2px;top:21.3px"></div>
<div class="c h" style="left:813.15px;top:20px;font-size:13.0px;letter-spacing:0.103px">Total</div>
<div class="fb" style="left:847.2px;top:21.3px"></div>
<div class="c h" style="left:866.43px;top:20px;font-size:13.0px;letter-spacing:-0.156px">Invoice Status</div>
<div class="fb" style="left:970.2px;top:21.3px"></div>
<div class="abs" style="left:24px;top:40px;width:963px;height:19px;background:#e2efda"></div>
<div class="abs" style="left:24px;top:59px;width:964px;height:1px;background:#a9d08e"></div>
<div class="abs" style="left:987px;top:40px;width:1px;height:20px;background:#a9d08e"></div>
<div class="c" style="left:25.72px;top:40px;font-size:12.8px;letter-spacing:-0.303px">S00015</div>
<div class="c" style="left:155.56px;top:40px;font-size:12.8px;letter-spacing:-0.030px">20.03.2022 20:38</div>
<div class="c" style="left:259.64px;top:40px;font-size:13.2px;letter-spacing:0.544px">Gemini Furniture</div>
<div class="c" style="left:425.22px;top:40px;font-size:13.2px;letter-spacing:0.278px">Marc Demo</div>
<div class="c" style="left:528.67px;top:40px;font-size:13.2px;letter-spacing:0.429px">Order Upsell</div>
<div class="c" style="left:719.01px;top:40px;font-size:13.2px;letter-spacing:0.144px">YourCompany</div>
<div class="c" style="left:823.02px;top:40px;font-size:12.8px;letter-spacing:-0.088px">1186,5</div>
<div class="c" style="left:866.22px;top:40px;font-size:13.2px;letter-spacing:0.500px">Nothing to Invoice</div>
<div class="abs" style="left:24px;top:79px;width:964px;height:1px;background:#a9d08e"></div>
<div class="abs" style="left:987px;top:60px;width:1px;height:20px;background:#a9d08e"></div>
<div class="c" style="left:25.72px;top:60px;font-size:12.8px;letter-spacing:-0.298px">S00013</div>
<div class="c" style="left:155.56px;top:60px;font-size:12.8px;letter-spacing:-0.030px">20.03.2022 20:38</div>
<div class="c" style="left:259.64px;top:60px;font-size:13.2px;letter-spacing:0.544px">Gemini Furniture</div>
<div class="c" style="left:425.22px;top:60px;font-size:13.2px;letter-spacing:0.278px">Marc Demo</div>
<div class="c" style="left:528.22px;top:60px;font-size:13.2px;letter-spacing:0.023px">False</div>
<div class="c" style="left:719.01px;top:60px;font-size:13.2px;letter-spacing:0.144px">YourCompany</div>
<div class="c" style="left:833.43px;top:60px;font-size:12.8px;letter-spacing:-0.019px">1582</div>
<div class="c" style="left:866.22px;top:60px;font-size:13.2px;letter-spacing:0.500px">Nothing to Invoice</div>
<div class="abs" style="left:24px;top:80px;width:963px;height:19px;background:#e2efda"></div>
<div class="abs" style="left:24px;top:99px;width:964px;height:1px;background:#a9d08e"></div>
<div class="abs" style="left:987px;top:80px;width:1px;height:20px;background:#a9d08e"></div>
<div class="c" style="left:25.72px;top:80px;font-size:12.8px;letter-spacing:-0.281px">S00012</div>
<div class="c" style="left:155.56px;top:80px;font-size:12.8px;letter-spacing:-0.030px">20.03.2022 20:38</div>
<div class="c" style="left:259.64px;top:80px;font-size:13.2px;letter-spacing:0.544px">Gemini Furniture</div>
<div class="c" style="left:425.22px;top:80px;font-size:13.2px;letter-spacing:0.278px">Marc Demo</div>
<div class="c" style="left:528.22px;top:80px;font-size:13.2px;letter-spacing:0.023px">False</div>
<div class="c" style="left:719.01px;top:80px;font-size:13.2px;letter-spacing:0.144px">YourCompany</div>
<div class="c" style="left:830.71px;top:80px;font-size:12.8px;letter-spacing:-0.250px">415,5</div>
<div class="c" style="left:866.22px;top:80px;font-size:13.2px;letter-spacing:0.500px">Nothing to Invoice</div>
<div class="abs" style="left:24px;top:119px;width:964px;height:1px;background:#a9d08e"></div>
<div class="abs" style="left:987px;top:100px;width:1px;height:20px;background:#a9d08e"></div>
<div class="c" style="left:25.72px;top:100px;font-size:12.8px;letter-spacing:-0.285px">S00011</div>
<div class="c" style="left:155.56px;top:100px;font-size:12.8px;letter-spacing:-0.030px">20.03.2022 20:38</div>
<div class="c" style="left:259.64px;top:100px;font-size:13.2px;letter-spacing:0.544px">Gemini Furniture</div>
<div class="c" style="left:425.22px;top:100px;font-size:13.2px;letter-spacing:0.278px">Marc Demo</div>
<div class="c" style="left:528.22px;top:100px;font-size:13.2px;letter-spacing:0.315px">Email</div>
<div class="c" style="left:719.01px;top:100px;font-size:13.2px;letter-spacing:0.144px">YourCompany</div>
<div class="c" style="left:840.89px;top:100px;font-size:12.8px;letter-spacing:-0.241px">556</div>
<div class="c" style="left:866.22px;top:100px;font-size:13.2px;letter-spacing:0.500px">Nothing to Invoice</div>
<div class="abs" style="left:24px;top:120px;width:963px;height:19px;background:#e2efda"></div>
<div class="abs" style="left:24px;top:139px;width:964px;height:1px;background:#a9d08e"></div>
<div class="abs" style="left:987px;top:120px;width:1px;height:20px;background:#a9d08e"></div>
<div class="c" style="left:25.72px;top:120px;font-size:12.8px;letter-spacing:-0.289px">S00009</div>
<div class="c" style="left:155.56px;top:120px;font-size:12.8px;letter-spacing:-0.030px">20.03.2022 20:38</div>
<div class="c" style="left:259.64px;top:120px;font-size:13.2px;letter-spacing:0.544px">Gemini Furniture</div>
<div class="c" style="left:425.22px;top:120px;font-size:13.2px;letter-spacing:0.278px">Marc Demo</div>
<div class="c" style="left:528.63px;top:120px;font-size:13.2px;letter-spacing:0.490px">Confirm Delivery</div>
<div class="c" style="left:719.01px;top:120px;font-size:13.2px;letter-spacing:0.144px">YourCompany</div>
<div class="c" style="left:840.74px;top:120px;font-size:12.8px;letter-spacing:-0.138px">751</div>
<div class="c" style="left:866.22px;top:120px;font-size:13.2px;letter-spacing:0.500px">Nothing to Invoice</div>
<div class="abs" style="left:24px;top:159px;width:964px;height:1px;background:#a9d08e"></div>
<div class="abs" style="left:987px;top:140px;width:1px;height:20px;background:#a9d08e"></div>
<div class="c" style="left:26.00px;top:140px;font-size:13.2px;letter-spacing:0.297px">Test/001</div>
<div class="c" style="left:155.56px;top:140px;font-size:12.8px;letter-spacing:-0.030px">20.03.2022 20:38</div>
<div class="c" style="left:259.64px;top:140px;font-size:13.2px;letter-spacing:0.544px">Gemini Furniture</div>
<div class="c" style="left:425.22px;top:140px;font-size:13.2px;letter-spacing:0.278px">Marc Demo</div>
<div class="c" style="left:528.22px;top:140px;font-size:13.2px;letter-spacing:0.023px">False</div>
<div class="c" style="left:719.01px;top:140px;font-size:13.2px;letter-spacing:0.144px">YourCompany</div>
<div class="c" style="left:841.11px;top:140px;font-size:12.8px;letter-spacing:-0.309px">462</div>
<div class="c" style="left:866.22px;top:140px;font-size:13.2px;letter-spacing:0.500px">Nothing to Invoice</div>
<div class="abs" style="left:24px;top:160px;width:963px;height:19px;background:#e2efda"></div>
<div class="abs" style="left:24px;top:179px;width:964px;height:1px;background:#a9d08e"></div>
<div class="abs" style="left:987px;top:160px;width:1px;height:20px;background:#a9d08e"></div>
<div class="c" style="left:25.72px;top:160px;font-size:12.8px;letter-spacing:-0.281px">S00007</div>
<div class="c" style="left:155.56px;top:160px;font-size:12.8px;letter-spacing:-0.030px">20.03.2022 20:38</div>
<div class="c" style="left:259.64px;top:160px;font-size:13.2px;letter-spacing:0.544px">Gemini Furniture</div>
<div class="c" style="left:425.22px;top:160px;font-size:13.2px;letter-spacing:0.770px">Mitchell Admin</div>
<div class="c" style="left:528.63px;top:160px;font-size:13.2px;letter-spacing:0.472px">Check delivery requirements</div>
<div class="c" style="left:719.01px;top:160px;font-size:13.2px;letter-spacing:0.144px">YourCompany</div>
<div class="c" style="left:833.43px;top:160px;font-size:12.8px;letter-spacing:-0.046px">1706</div>
<div class="c" style="left:867.00px;top:160px;font-size:13.2px;letter-spacing:0.254px">To Invoice</div>
<div class="abs" style="left:24px;top:199px;width:964px;height:1px;background:#a9d08e"></div>
<div class="abs" style="left:987px;top:180px;width:1px;height:20px;background:#a9d08e"></div>
<div class="c" style="left:25.72px;top:180px;font-size:12.8px;letter-spacing:-0.298px">S00006</div>
<div class="c" style="left:155.56px;top:180px;font-size:12.8px;letter-spacing:-0.030px">20.03.2022 20:38</div>
<div class="c" style="left:259.22px;top:180px;font-size:13.2px;letter-spacing:0.333px">Lumber Inc</div>
<div class="c" style="left:425.22px;top:180px;font-size:13.2px;letter-spacing:0.770px">Mitchell Admin</div>
<div class="c" style="left:528.22px;top:180px;font-size:13.2px;letter-spacing:0.023px">False</div>
<div class="c" style="left:719.01px;top:180px;font-size:13.2px;letter-spacing:0.144px">YourCompany</div>
<div class="c" style="left:840.74px;top:180px;font-size:12.8px;letter-spacing:-0.200px">750</div>
<div class="c" style="left:866.22px;top:180px;font-size:13.2px;letter-spacing:0.500px">Nothing to Invoice</div>
<div class="abs" style="left:24px;top:200px;width:963px;height:19px;background:#e2efda"></div>
<div class="abs" style="left:24px;top:219px;width:964px;height:1px;background:#a9d08e"></div>
<div class="abs" style="left:987px;top:200px;width:1px;height:20px;background:#a9d08e"></div>
<div class="c" style="left:25.72px;top:200px;font-size:12.8px;letter-spacing:-0.335px">S00004</div>
<div class="c" style="left:155.56px;top:200px;font-size:12.8px;letter-spacing:-0.030px">20.03.2022 20:38</div>
<div class="c" style="left:259.64px;top:200px;font-size:13.2px;letter-spacing:0.544px">Gemini Furniture</div>
<div class="c" style="left:425.22px;top:200px;font-size:13.2px;letter-spacing:0.770px">Mitchell Admin</div>
<div class="c" style="left:528.67px;top:200px;font-size:13.2px;letter-spacing:0.429px">Order Upsell</div>
<div class="c" style="left:719.01px;top:200px;font-size:13.2px;letter-spacing:0.144px">YourCompany</div>
<div class="c" style="left:833.76px;top:200px;font-size:12.8px;letter-spacing:-0.177px">2240</div>
<div class="c" style="left:866.22px;top:200px;font-size:13.2px;letter-spacing:0.500px">Nothing to Invoice</div>
<div class="abs" style="left:24px;top:239px;width:964px;height:1px;background:#a9d08e"></div>
<div class="abs" style="left:987px;top:220px;width:1px;height:20px;background:#a9d08e"></div>
<div class="c" style="left:25.72px;top:220px;font-size:12.8px;letter-spacing:-0.299px">S00008</div>
<div class="c" style="left:155.22px;top:220px;font-size:12.8px;letter-spacing:-0.008px">13.03.2022 20:38</div>
<div class="c" style="left:259.64px;top:220px;font-size:13.2px;letter-spacing:0.544px">Gemini Furniture</div>
<div class="c" style="left:425.22px;top:220px;font-size:13.2px;letter-spacing:0.278px">Marc Demo</div>
<div class="c" style="left:528.22px;top:220px;font-size:13.2px;letter-spacing:0.023px">False</div>
<div class="c" style="left:719.01px;top:220px;font-size:13.2px;letter-spacing:0.144px">YourCompany</div>
<div class="c" style="left:840.75px;top:220px;font-size:12.8px;letter-spacing:-0.266px">654</div>
<div class="c" style="left:866.22px;top:220px;font-size:13.2px;letter-spacing:0.500px">Nothing to Invoice</div>
<div class="abs" style="left:24px;top:240px;width:963px;height:19px;background:#e2efda"></div>
<div class="abs" style="left:24px;top:259px;width:964px;height:1px;background:#a9d08e"></div>
<div class="abs" style="left:987px;top:240px;width:1px;height:20px;background:#a9d08e"></div>
<div class="c" style="left:25.72px;top:240px;font-size:12.8px;letter-spacing:-0.335px">S00014</div>
<div class="c" style="left:155.70px;top:240px;font-size:12.8px;letter-spacing:-0.040px">06.03.2022 20:38</div>
<div class="c" style="left:259.64px;top:240px;font-size:13.2px;letter-spacing:0.544px">Gemini Furniture</div>
<div class="c" style="left:425.22px;top:240px;font-size:13.2px;letter-spacing:0.278px">Marc Demo</div>
<div class="c" style="left:528.22px;top:240px;font-size:13.2px;letter-spacing:0.023px">False</div>
<div class="c" style="left:719.01px;top:240px;font-size:13.2px;letter-spacing:0.144px">YourCompany</div>
<div class="c" style="left:823.02px;top:240px;font-size:12.8px;letter-spacing:-0.088px">1541,5</div>
<div class="c" style="left:866.22px;top:240px;font-size:13.2px;letter-spacing:0.500px">Nothing to Invoice</div>
<div class="abs" style="left:24px;top:279px;width:964px;height:1px;background:#a9d08e"></div>
<div class="abs" style="left:987px;top:260px;width:1px;height:20px;background:#a9d08e"></div>
<div class="c" style="left:25.72px;top:260px;font-size:12.8px;letter-spacing:-0.310px">S00010</div>
<div class="c" style="left:155.56px;top:260px;font-size:12.8px;letter-spacing:-0.030px">27.02.2022 20:38</div>
<div class="c" style="left:259.64px;top:260px;font-size:13.2px;letter-spacing:0.544px">Gemini Furniture</div>
<div class="c" style="left:425.22px;top:260px;font-size:13.2px;letter-spacing:0.278px">Marc Demo</div>
<div class="c" style="left:528.22px;top:260px;font-size:13.2px;letter-spacing:0.023px">False</div>
<div class="c" style="left:719.01px;top:260px;font-size:13.2px;letter-spacing:0.144px">YourCompany</div>
<div class="c" style="left:823.02px;top:260px;font-size:12.8px;letter-spacing:-0.088px">1096,5</div>
<div class="c" style="left:866.22px;top:260px;font-size:13.2px;letter-spacing:0.500px">Nothing to Invoice</div>
<div class="abs" style="left:24px;top:280px;width:963px;height:19px;background:#e2efda"></div>
<div class="abs" style="left:24px;top:299px;width:964px;height:1px;background:#a9d08e"></div>
<div class="abs" style="left:987px;top:280px;width:1px;height:20px;background:#a9d08e"></div>
<div class="c" style="left:25.72px;top:280px;font-size:12.8px;letter-spacing:-0.289px">S00019</div>
<div class="c" style="left:155.56px;top:280px;font-size:12.8px;letter-spacing:-0.030px">20.02.2022 20:38</div>
<div class="c" style="left:260.01px;top:280px;font-size:13.2px;letter-spacing:0.260px">YourCompany, Joel Willis</div>
<div class="c" style="left:425.22px;top:280px;font-size:13.2px;letter-spacing:0.770px">Mitchell Admin</div>
<div class="c" style="left:528.22px;top:280px;font-size:13.2px;letter-spacing:0.023px">False</div>
<div class="c" style="left:719.01px;top:280px;font-size:13.2px;letter-spacing:0.144px">YourCompany</div>
<div class="c" style="left:823.36px;top:280px;font-size:12.8px;letter-spacing:-0.154px">2947,5</div>
<div class="c" style="left:866.22px;top:280px;font-size:13.2px;letter-spacing:0.500px">Nothing to Invoice</div>
<div class="abs" style="left:24px;top:319px;width:964px;height:1px;background:#a9d08e"></div>
<div class="abs" style="left:987px;top:300px;width:1px;height:20px;background:#a9d08e"></div>
<div class="c" style="left:25.72px;top:300px;font-size:12.8px;letter-spacing:-0.298px">S00016</div>
<div class="c" style="left:155.56px;top:300px;font-size:12.8px;letter-spacing:-0.030px">20.02.2022 20:38</div>
<div class="c" style="left:259.64px;top:300px;font-size:13.2px;letter-spacing:0.544px">Gemini Furniture</div>
<div class="c" style="left:425.22px;top:300px;font-size:13.2px;letter-spacing:0.278px">Marc Demo</div>
<div class="c" style="left:528.22px;top:300px;font-size:13.2px;letter-spacing:0.023px">False</div>
<div class="c" style="left:719.01px;top:300px;font-size:13.2px;letter-spacing:0.144px">YourCompany</div>
<div class="c" style="left:840.80px;top:300px;font-size:12.8px;letter-spacing:-0.166px">951</div>
<div class="c" style="left:866.22px;top:300px;font-size:13.2px;letter-spacing:0.500px">Nothing to Invoice</div>
<div class="abs" style="left:24px;top:320px;width:963px;height:19px;background:#e2efda"></div>
<div class="abs" style="left:24px;top:339px;width:964px;height:1px;background:#a9d08e"></div>
<div class="abs" style="left:987px;top:320px;width:1px;height:20px;background:#a9d08e"></div>
<div class="c" style="left:25.72px;top:320px;font-size:12.8px;letter-spacing:-0.281px">S00017</div>
<div class="c" style="left:155.22px;top:320px;font-size:12.8px;letter-spacing:-0.008px">13.02.2022 20:38</div>
<div class="c" style="left:259.64px;top:320px;font-size:13.2px;letter-spacing:0.544px">Gemini Furniture</div>
<div class="c" style="left:425.22px;top:320px;font-size:13.2px;letter-spacing:0.278px">Marc Demo</div>
<div class="c" style="left:528.22px;top:320px;font-size:13.2px;letter-spacing:0.023px">False</div>
<div class="c" style="left:719.01px;top:320px;font-size:13.2px;letter-spacing:0.144px">YourCompany</div>
<div class="c" style="left:840.84px;top:320px;font-size:12.8px;letter-spacing:-0.188px">831</div>
<div class="c" style="left:866.22px;top:320px;font-size:13.2px;letter-spacing:0.500px">Nothing to Invoice</div>
<svg class="abs" style="left:983px;top:335px" width="4" height="4"><path d="M0 3h4v1h-4zM2 0h2v4h-2z" fill="#3a55b4"/></svg>
</div>
<svg class="abs" style="left:0;top:0;z-index:50;pointer-events:none" width="1172" height="180" viewBox="0 0 1172 180"><rect x="371.9" y="30.9" width="75.2" height="64.1" fill="none" stroke="#a51c30" stroke-width="4"/><path d="M217.2 138L350 84.2" stroke="#a51c30" stroke-width="4" stroke-linecap="round" fill="none"/><polygon points="346,78.4 366.9,77.3 352.2,90.9" fill="#a51c30"/></svg>
</body></html>
